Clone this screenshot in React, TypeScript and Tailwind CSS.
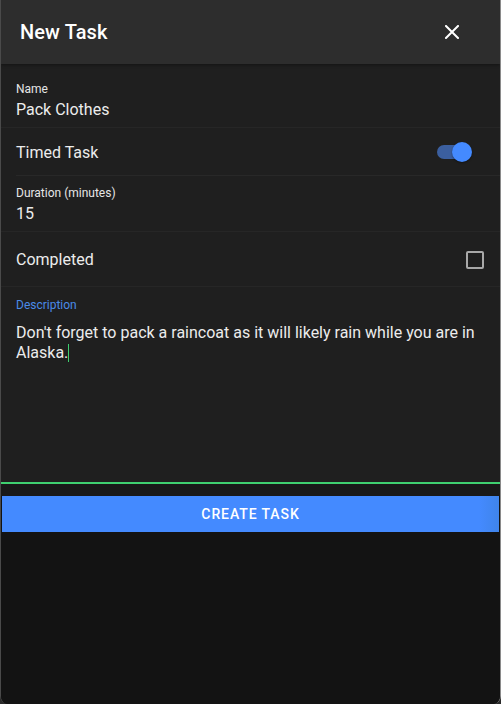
import React from "react";

export default function App() {
  return (
    <div
      className="w-[501px] h-[704px] bg-[#2a2a2a] overflow-hidden"
      style={{ fontFamily: "Roboto, 'Liberation Sans', sans-serif" }}
    >
      <div className="w-[501px] h-[704px] flex flex-col bg-[#131313] border-l border-l-[#4a4a4a] border-r border-r-[#8a8a8a] rounded-b-[8px] overflow-hidden">
        {/* Header */}
        <div className="h-[64px] shrink-0 bg-[#2d2d2d] flex items-center justify-between pl-[19px] pr-[41px] shadow-[0_1px_3px_rgba(0,0,0,0.4)] relative z-10">
          <span className="text-[20px] font-medium text-white tracking-[0.1px]">New Task</span>
          <svg width="14" height="14" viewBox="0 0 14 14" className="mt-[-1px]">
            <path d="M1 1 L13 13 M13 1 L1 13" stroke="white" strokeWidth="2" strokeLinecap="square" />
          </svg>
        </div>

        {/* Body */}
        <div className="h-[418px] shrink-0 bg-[#1f1f1f] flex flex-col">
          {/* Name */}
          <div className="h-[64px] shrink-0 pl-[15px] pt-[18px] flex flex-col border-b border-b-[#262626]">
            <span className="text-[12px] leading-[14px] text-[#e6e6e6]">Name</span>
            <span className="text-[16px] leading-[20px] mt-[4px] text-[#ececec]">Pack Clothes</span>
          </div>
          {/* Timed Task */}
          <div className="ml-[15px] h-[48px] shrink-0 pt-[2px] pr-[28px] flex items-center justify-between border-b border-b-[#282828]">
            <span className="text-[16px] text-[#ececec]">Timed Task</span>
            <div className="relative w-[36px] h-[20px] mt-[-2px] flex items-center">
              <div className="w-[28px] h-[14px] rounded-full bg-[#3b5f9f] ml-[1px]" />
              <div className="absolute right-[0px] top-0 w-[20px] h-[20px] rounded-full bg-[#448aff] shadow-[0_1px_2px_rgba(0,0,0,0.4)]" />
            </div>
          </div>
          {/* Duration */}
          <div className="h-[56px] shrink-0 pl-[15px] pt-[10px] flex flex-col border-b border-b-[#262626]">
            <span className="text-[12px] leading-[14px] text-[#e6e6e6]">Duration (minutes)</span>
            <span className="text-[16px] leading-[20px] mt-[4px] text-[#ececec]">15</span>
          </div>
          {/* Completed */}
          <div className="h-[55px] shrink-0 pl-[15px] pr-[16px] pt-[2px] flex items-center justify-between border-b border-b-[#262626]">
            <span className="text-[16px] text-[#ececec]">Completed</span>
            <div className="w-[18px] h-[18px] border-2 border-[#a8a8a8] rounded-[2px] mt-[-1px]" />
          </div>
          {/* Description */}
          <div className="flex-1 pl-[15px] pr-[16px] pt-[11px] flex flex-col">
            <span className="text-[12px] leading-[14px] text-[#4a8be8]">Description</span>
            <p className="text-[16px] leading-[20px] mt-[11px] text-[#ececec]">
              Don't forget to pack a raincoat as it will likely rain while you are in Alaska.
              <span className="inline-block w-[1px] h-[18px] bg-[#3ecf6e] align-[-4px]" />
            </p>
          </div>
        </div>
        {/* green line */}
        <div className="h-[2px] shrink-0 bg-[#3fd070]" />
        {/* footer */}
        <div className="h-[12px] shrink-0 bg-[#191919]" />
        <div className="shrink-0 px-[1px] bg-[#131313]">
          <div className="h-[36px] bg-[linear-gradient(to_right,#448aff_96%,#3f84ea)] flex items-center justify-center">
            <span className="text-[14px] font-medium tracking-[0.9px] text-white">CREATE TASK</span>
          </div>
        </div>
        <div className="flex-1 bg-[#131313]" />
      </div>
    </div>
  );
}
